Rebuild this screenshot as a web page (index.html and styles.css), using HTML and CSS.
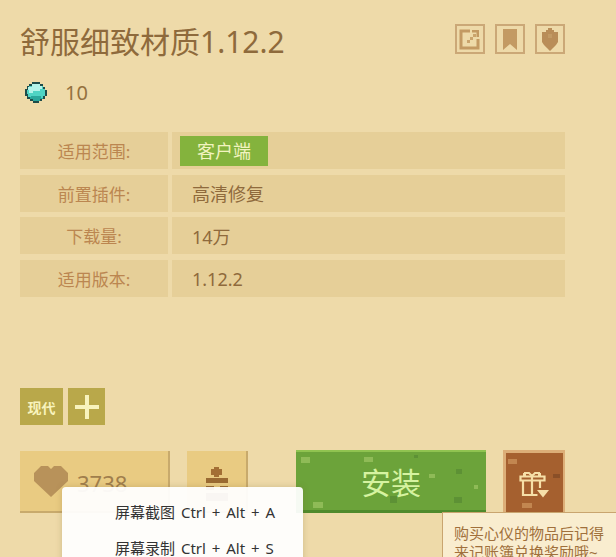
FILE: index.html
```html
<!DOCTYPE html>
<html lang="zh-CN">
<head>
    <meta charset="UTF-8">
    <meta name="viewport" content="width=device-width, initial-scale=1.0">
    <title>舒服细致材质1.12.2</title>
    <link rel="stylesheet" href="styles.css">
</head>
<body>
    <div class="detail">
        <div class="head">
            <h1 class="title">舒服细致材质1.12.2</h1>
            <div class="head-icons">
                <a class="icon-btn">
                    <svg width="26" height="26" viewBox="0 0 26 26" fill="none">
                        <path d="M13 5H4v17h17v-9" stroke="#c39a63" stroke-width="3"/>
                        <path d="M15 4h7v7h-2.500V6.500H15z" fill="#c39a63"/>
                        <path d="M10 14h3v3h-3zM13 11h3v3h-3zM16 8h3v3h-3z" fill="#c39a63" opacity="0.85"/>
                    </svg>
                </a>
                <a class="icon-btn">
                    <svg width="26" height="26" viewBox="0 0 26 26">
                        <path d="M6 3h14v21l-7-6-7 6z" fill="#c39a63"/>
                    </svg>
                </a>
                <a class="icon-btn">
                    <svg width="26" height="26" viewBox="0 0 26 26">
                        <path d="M11 2h4v2h2v2h4v10l-2 3-3 3-3 3-3-3-3-3-2-3V6h4V4h2z" fill="#b98d58"/>
                        <path d="M11 8h4v4h-4z" fill="#c29a64"/>
                    </svg>
                </a>
            </div>
        </div>

        <div class="price">
            <svg class="diamond" width="22" height="21" viewBox="0 0 22 21">
                <path d="M7 0h8v2h3v3h2v3h2v6h-2v3h-3v2h-3v2H8v-2H5v-2H2v-3H0V7h2V4h2V2h3z" fill="#1d4c4a"/>
                <path d="M7 2h8v2h3v3h2v7h-2v3h-3v2H8v-2H5v-2H3v-3H2V8h2V4h3z" fill="#4fd4c4"/>
                <path d="M7 2h8v2h2v3h-2v2H8v2H4V8H3V5h4z" fill="#b4f4ea"/>
                <path d="M6 14h10v2h2v1h-3v2H8v-2H5v-2h1z" fill="#2aa89c"/>
            </svg>
            <span>10</span>
        </div>

        <div class="info">
            <div class="info-label">适用范围:</div>
            <div class="info-value"><span class="side-tag">客户端</span></div>
            <div class="info-label">前置插件:</div>
            <div class="info-value">高清修复</div>
            <div class="info-label">下载量:</div>
            <div class="info-value">14万</div>
            <div class="info-label">适用版本:</div>
            <div class="info-value">1.12.2</div>
        </div>

        <div class="tags">
            <span class="tag">现代</span>
            <span class="tag tag-add">
                <svg width="24" height="24" viewBox="0 0 24 24"><path d="M10 0h4v10h10v4H14v10h-4V14H0v-4h10z" fill="#f8f3bd"/></svg>
            </span>
        </div>

        <div class="actions">
            <div class="btn-like">
                <svg width="34" height="31" viewBox="0 0 34 31">
                    <path d="M7 0h7l3 3 3-3h7l7 7v8L17 31 0 15V7z" fill="#b8925a"/>
                </svg>
                <span>3738</span>
            </div>
            <div class="btn-collect">
                <svg width="24" height="36" viewBox="0 0 24 36">
                    <path d="M9 0h5v2h3v6h-3v2H9V8H6V2h3z" fill="#a36f35"/>
                    <path d="M1 11h22v5H1zM1 19h8v4H1zM15 19h8v4h-8zM1 26h22v8H1z" fill="#9a6a32"/>
                </svg>
            </div>
            <div class="btn-install">安装</div>
            <div class="btn-gift">
                <svg width="31" height="31" viewBox="0 0 31 31" fill="none">
                    <path d="M5 4h5l3 3M21 4h-5l-3 3M5 4v2h2M21 4v2h-2" stroke="#f6dfa8" stroke-width="2"/>
                    <path d="M1.500 7.500h24v4h-24zM4 11.500V26h14.500M13 7.500V26M21 11.500V19" stroke="#f6dfa8" stroke-width="2.200"/>
                    <path d="M18 21h12l-6 7.500z" fill="#f6dfa8"/>
                </svg>
            </div>
        </div>
    </div>

    <div class="shot-menu">
        <div class="shot-item">屏幕截图 Ctrl + Alt + A</div>
        <div class="shot-item">屏幕录制 Ctrl + Alt + S</div>
    </div>

    <div class="gift-tip">购买心仪的物品后记得来记账簿兑换奖励哦~</div>
</body>
</html>
```

FILE: styles.css
```css
html, body {
    margin: 0;
    height: 557px;
    overflow: hidden;
}

body {
    position: relative;
    background-color: #eedaa9;
    font-family: "Noto Sans", "Noto Sans CJK SC", sans-serif;
    color: #8f6a3c;
}

.detail {
    width: 545px;
    padding: 20px 0 0 20px;
}

.head {
    display: flex;
    justify-content: space-between;
    align-items: center;
    height: 40px;
}

.title {
    margin: 2px 0 -2px;
    font-size: 30px;
    font-weight: 400;
    line-height: 40px;
    color: #8e6a3c;
}

.head-icons {
    display: flex;
    gap: 10px;
    margin-top: -2px;
}

.icon-btn {
    display: flex;
    justify-content: center;
    align-items: center;
    width: 26px;
    height: 26px;
    border: 2px solid #cba877;
}

.price {
    display: flex;
    align-items: center;
    gap: 18px;
    height: 24px;
    margin-top: 20px;
    padding-left: 5px;
    font-size: 20px;
    line-height: 24px;
    color: #94713f;
}

.price span {
    padding-top: 2px;
}

.info {
    display: grid;
    grid-template-columns: 148px 393px;
    grid-auto-rows: 37px;
    gap: 5.7px 4px;
    margin-top: 28px;
}

.info-label {
    display: flex;
    justify-content: center;
    align-items: center;
    background-color: #e6cf98;
    font-size: 17px;
    color: #bb8650;
}

.info-value {
    display: flex;
    align-items: center;
    padding-left: 20px;
    background-color: #e6cf98;
    font-size: 18px;
    color: #8f6a3c;
}

.side-tag {
    width: 88px;
    height: 30px;
    margin-left: -12px;
    background-color: #84b33d;
    color: #f2f3c0;
    font-size: 18px;
    line-height: 30px;
    text-align: center;
}

.tags {
    display: flex;
    gap: 5px;
    margin-top: 91px;
}

.tag {
    display: flex;
    justify-content: center;
    align-items: center;
    width: 43px;
    height: 37px;
    background-color: #b9a84a;
    color: #f8f3bd;
    font-size: 14px;
    font-weight: 700;
}

.tag-add {
    width: 37px;
}

.actions {
    display: flex;
    align-items: flex-start;
    height: 63px;
    margin-top: 25px;
}

.btn-like {
    display: flex;
    align-items: center;
    gap: 9px;
    box-sizing: border-box;
    width: 150px;
    height: 62px;
    margin-top: 1px;
    padding: 0 0 0 14px;
    background-color: #e9cb82;
    border-right: 2px solid #c8aa6c;
    border-bottom: 2px solid #c8aa6c;
    font-size: 22px;
    color: #a07e4c;
}

.btn-like span {
    padding-top: 4px;
}

.btn-collect {
    display: flex;
    justify-content: center;
    box-sizing: border-box;
    width: 61px;
    height: 62px;
    margin: 1px 0 0 17px;
    padding-top: 16px;
    background-color: #e9cb82;
    border-right: 2px solid #c8aa6c;
    border-bottom: 2px solid #c8aa6c;
}

.btn-install {
    box-sizing: border-box;
    width: 190px;
    height: 63px;
    margin-left: 48px;
    border-top: 2px solid #90c350;
    border-bottom: 3px solid #4f8a2c;
    background-color: #6ca33a;
    background-image:
        linear-gradient(#8fbb57, #8fbb57),
        linear-gradient(#8fbb57, #8fbb57),
        linear-gradient(#8fbb57, #8fbb57),
        linear-gradient(#8fbb57, #8fbb57),
        linear-gradient(#8fbb57, #8fbb57),
        linear-gradient(#5d9135, #5d9135),
        linear-gradient(#5d9135, #5d9135),
        linear-gradient(#5d9135, #5d9135),
        linear-gradient(#5d9135, #5d9135);
    background-repeat: no-repeat;
    background-size: 9px 6px, 9px 5px, 6px 4px, 4px 4px, 10px 6px, 4px 3px, 6px 5px, 7px 7px, 8px 6px;
    background-position: 5px 5px, 68px 5px, 133px 22px, 178px 33px, 17px 50px, 118px 3px, 160px 17px, 94px 44px, 158px 45px;
    color: #d6f3a0;
    font-size: 30px;
    line-height: 62px;
    text-align: center;
}

.btn-gift {
    display: flex;
    justify-content: center;
    box-sizing: border-box;
    width: 62px;
    height: 63px;
    margin-left: 17px;
    padding-top: 16px;
    border-top: 3px solid #dcae78;
    border-left: 3px solid #dcae78;
    border-right: 2px solid #dcae78;
    background-color: #a5602f;
    background-image:
        linear-gradient(#c28650, #c28650),
        linear-gradient(#c28650, #c28650),
        linear-gradient(#8a4f27, #8a4f27);
    background-repeat: no-repeat;
    background-size: 9px 5px, 10px 5px, 7px 4px;
    background-position: 2px 6px, 16px 50px, 47px 21px;
}

.shot-menu {
    position: absolute;
    left: 62px;
    top: 487px;
    box-sizing: border-box;
    width: 241px;
    height: 80px;
    padding-top: 8px;
    border-radius: 4px;
    background-color: rgba(255, 255, 255, 0.94);
    box-shadow: 0 0 6px rgba(120, 90, 40, 0.25);
}

.shot-item {
    height: 36px;
    padding-left: 53px;
    font-size: 15px;
    line-height: 35px;
    word-spacing: 2px;
    color: #333;
}

.gift-tip {
    position: absolute;
    left: 442px;
    top: 512px;
    box-sizing: border-box;
    width: 176px;
    height: 60px;
    padding: 11px 10px 0 11px;
    border: 1px solid #c9a56f;
    background-color: #f9edcf;
    font-size: 15px;
    line-height: 19px;
    color: #a0703c;
}
```
